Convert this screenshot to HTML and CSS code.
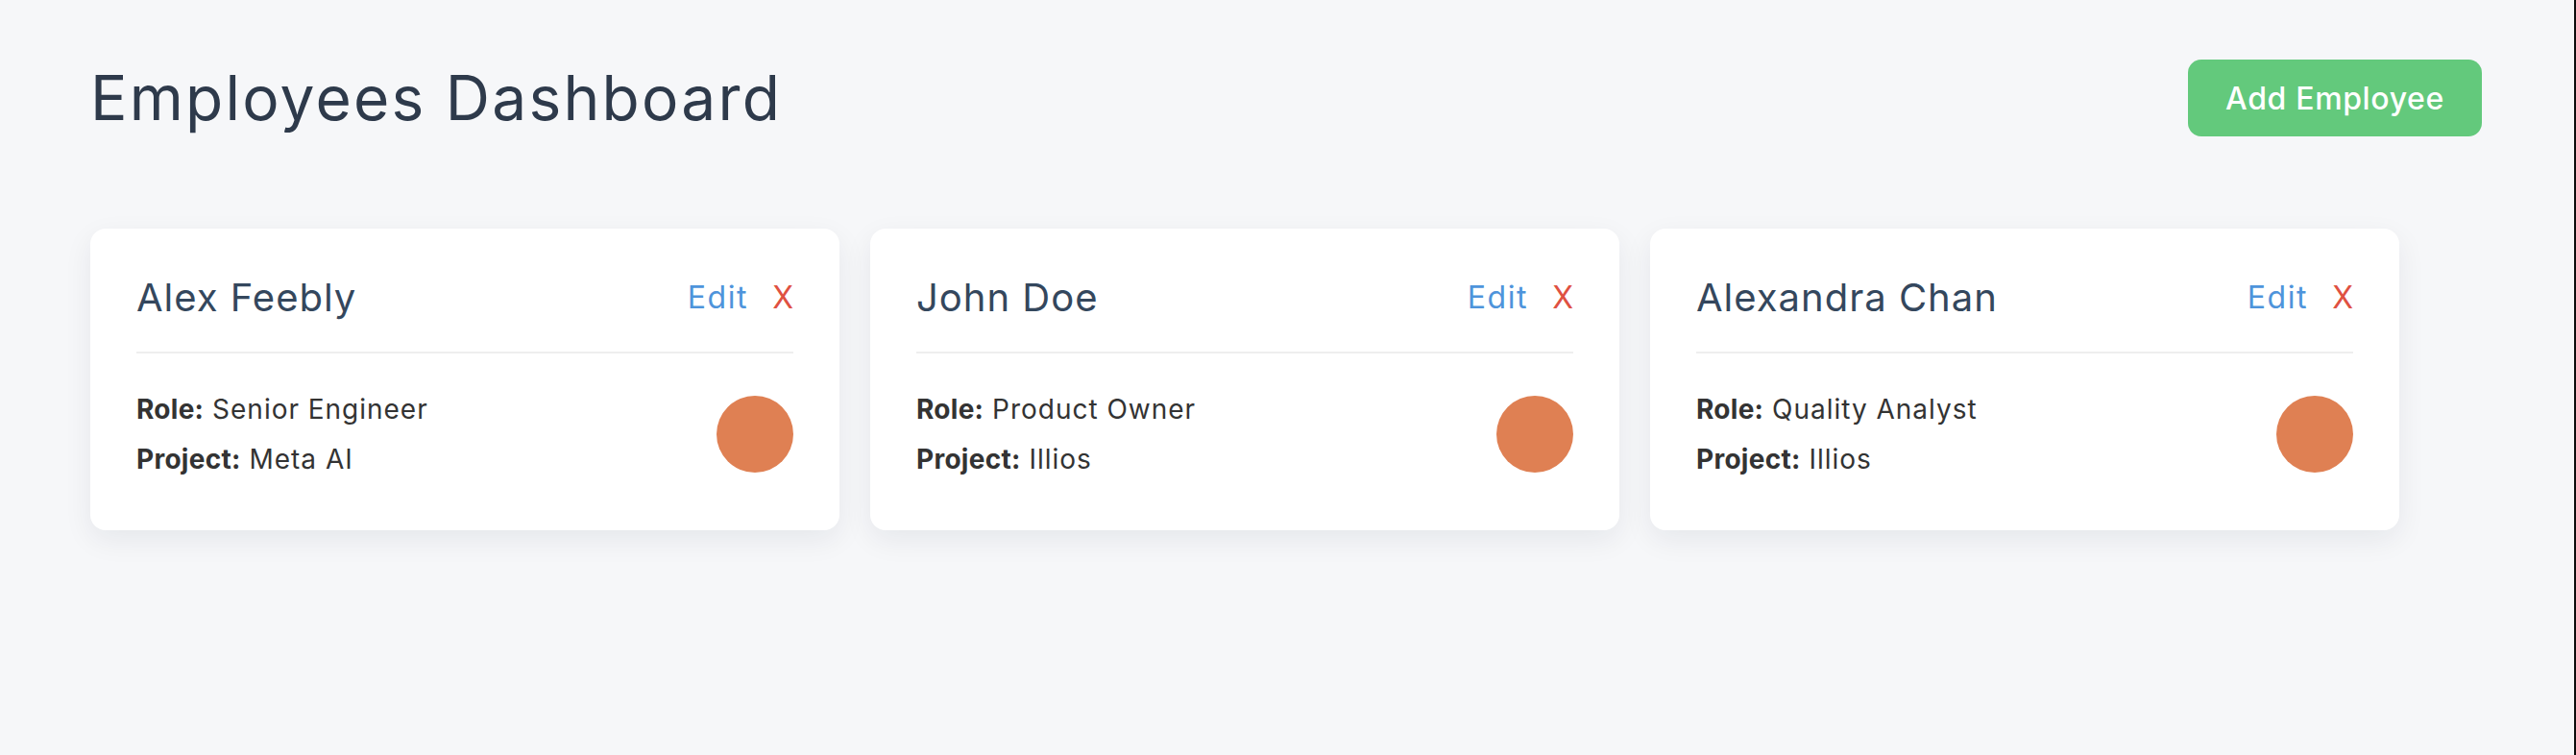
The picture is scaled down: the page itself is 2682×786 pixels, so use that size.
FILE: index.html
```html
<!DOCTYPE html>
<html lang="en">
<head>
<meta charset="utf-8">
<title>Employees Dashboard</title>
<link rel="stylesheet" href="styles.css">
</head>
<body>
<div class="page">
  <header class="topbar">
    <h1 class="title">Employees Dashboard</h1>
    <button class="btn-add" type="button">Add Employee</button>
  </header>
  <main class="cards">
    <article class="card">
      <div class="card-head">
        <h2 class="name">Alex Feebly</h2>
        <div class="actions"><a class="edit" href="#">Edit</a><a class="remove" href="#">X</a></div>
      </div>
      <div class="card-body">
        <div class="info">
          <p class="line"><strong>Role:</strong> Senior Engineer</p>
          <p class="line"><strong>Project:</strong> Meta AI</p>
        </div>
        <span class="avatar"></span>
      </div>
    </article>
    <article class="card">
      <div class="card-head">
        <h2 class="name">John Doe</h2>
        <div class="actions"><a class="edit" href="#">Edit</a><a class="remove" href="#">X</a></div>
      </div>
      <div class="card-body">
        <div class="info">
          <p class="line"><strong>Role:</strong> Product Owner</p>
          <p class="line"><strong>Project:</strong> Illios</p>
        </div>
        <span class="avatar"></span>
      </div>
    </article>
    <article class="card">
      <div class="card-head">
        <h2 class="name">Alexandra Chan</h2>
        <div class="actions"><a class="edit" href="#">Edit</a><a class="remove" href="#">X</a></div>
      </div>
      <div class="card-body">
        <div class="info">
          <p class="line"><strong>Role:</strong> Quality Analyst</p>
          <p class="line"><strong>Project:</strong> Illios</p>
        </div>
        <span class="avatar"></span>
      </div>
    </article>
  </main>
</div>
</body>
</html>
```
FILE: styles.css
```css
* { box-sizing: border-box; }
html, body { margin: 0; padding: 0; }
body {
  background: #f6f7f9;
  font-family: Inter, "Open Sans", sans-serif;
  color: #333333;
}
.page {
  min-height: 100vh;
  padding: 62px 96px 0 94px;
  border-right: 2px solid #0d0d0d;
}
.topbar {
  display: flex;
  justify-content: space-between;
  align-items: center;
}
.title {
  margin: 0;
  font-size: 64px;
  font-weight: 400;
  letter-spacing: 0.035em;
  line-height: 1.2;
  color: #2e3a4b;
}
.btn-add {
  height: 80px;
  padding: 0 39px;
  border: none;
  border-radius: 14px;
  background: #63c97c;
  color: #ffffff;
  font-family: inherit;
  font-size: 32px;
  font-weight: 500;
  letter-spacing: 0.02em;
}
.cards {
  display: flex;
  gap: 32px;
  margin-top: 96px;
}
.card {
  width: 780px;
  background: #ffffff;
  border-radius: 16px;
  padding: 48px 48px 53px;
  box-shadow: 0 10px 30px rgba(20, 30, 50, 0.07);
}
.card-head {
  display: flex;
  justify-content: space-between;
  align-items: center;
  padding-bottom: 32px;
  border-bottom: 2px solid #eeeeee;
}
.name {
  margin: 0;
  font-size: 40px;
  font-weight: 400;
  line-height: 48px;
  letter-spacing: 0.025em;
  color: #34475d;
}
.actions {
  display: flex;
  gap: 25px;
  font-size: 32px;
  line-height: 38px;
  letter-spacing: 0.05em;
}
.actions a { text-decoration: none; }
.edit { color: #4e94db; }
.remove { color: #df5142; letter-spacing: 0; }
.card-body {
  display: flex;
  justify-content: space-between;
  align-items: center;
  margin-top: 37px;
}
.info {
  display: flex;
  flex-direction: column;
  gap: 10px;
}
.line {
  margin: 0;
  font-size: 28px;
  line-height: 42px;
  letter-spacing: 0.035em;
  color: #333333;
}
.line strong { font-weight: 700; letter-spacing: 0.01em; }
.avatar {
  width: 80px;
  height: 80px;
  border-radius: 50%;
  background: #df8053;
  flex: none;
}
```
